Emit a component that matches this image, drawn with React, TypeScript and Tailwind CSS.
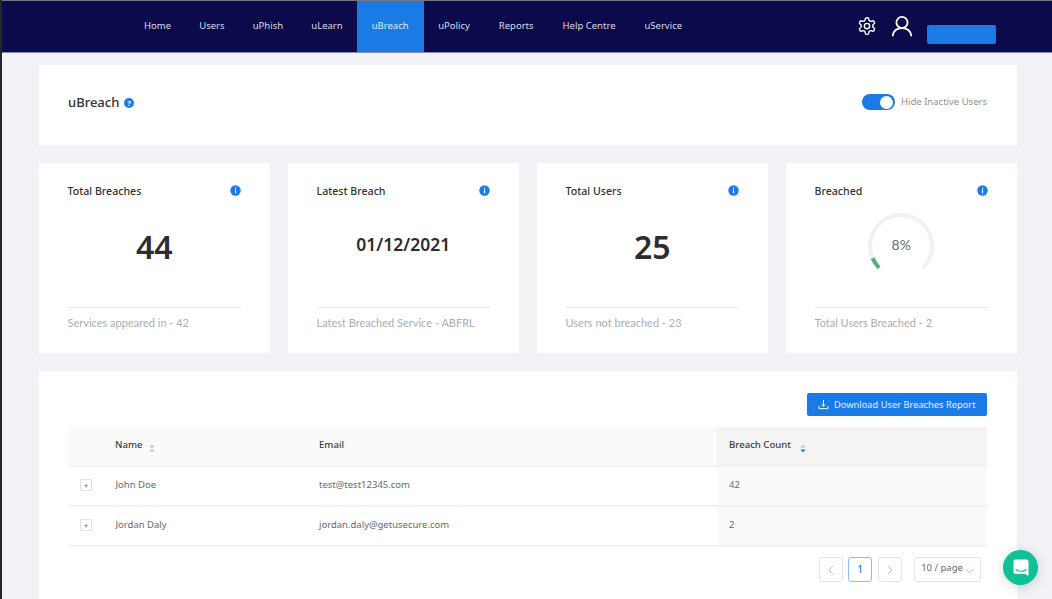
import React from "react";

const nav = ["Home", "Users", "uPhish", "uLearn", "uBreach", "uPolicy", "Reports", "Help Centre", "uService"];

function Info() {
  return (
    <svg width="11" height="11" viewBox="0 0 11 11" className="shrink-0">
      <circle cx="5.5" cy="5.5" r="5.2" fill="#1a7be4" />
      <rect x="5" y="2.3" width="1.1" height="1.2" fill="#fff" />
      <rect x="5" y="4.4" width="1.1" height="4" fill="#fff" />
    </svg>
  );
}

function Card({ title, footer, children }: { title: string; footer: string; children: React.ReactNode }) {
  return (
    <div className="flex flex-col bg-white pl-[28.5px] pr-[29px] h-[190px] pt-[20px] pb-[23px]">
      <div className="flex items-center justify-between h-[14px]">
        <span className="text-[10.6px] font-medium text-[#303236] mt-[4px]">{title}</span>
        <Info />
      </div>
      <div className="flex-1 flex items-center justify-center text-[#2b2d30]">{children}</div>
      <div className="border-t border-[#e8e8e8] pt-[8px] text-[11px] leading-[14px] text-[#abadb0]" style={{ fontFamily: "Lato, sans-serif" }}>{footer}</div>
    </div>
  );
}

function Sort({ active }: { active?: boolean }) {
  return (
    <svg width="6" height="9" viewBox="0 0 6 9" className={`mt-[6px] ${active ? "ml-[9px]" : "ml-[6px]"}`}>
      <path d="M3 0.5 L5.7 3.6 H0.3 Z" fill="#c4c6c8" />
      <path d="M3 8.5 L5.7 5.4 H0.3 Z" fill={active ? "#1a7be4" : "#c4c6c8"} />
    </svg>
  );
}

function Row({ name, email, count }: { name: string; email: string; count: string }) {
  return (
    <div className="grid grid-cols-[47px_204px_398px_1fr] h-[40px] border-b-2 border-[#f1f1f1] items-stretch text-[9.5px] text-[#66686b]">
      <div className="flex items-center pl-[12px] pb-[2px]">
        <span className="flex items-center justify-center w-[12px] h-[12px] border border-[#e2e2e2] rounded-[1px] text-[9px] leading-none text-[#777]">+</span>
      </div>
      <div className="flex items-center pb-[2px] pl-[0.5px]">{name}</div>
      <div className="flex items-center pb-[2px]">{email}</div>
      <div className="flex items-center pb-[2px] bg-[#fafafa] px-[12px]">{count}</div>
    </div>
  );
}

function PageBox({ children, className }: { children: React.ReactNode; className?: string }) {
  return (
    <div className={`flex items-center justify-center h-[25px] rounded-[3px] border ${className ?? ""}`}>{children}</div>
  );
}

function navClass(n: string) {
  if (n === "uBreach") return "bg-[#1a7be4] text-[#dfeaff] px-[15px]";
  if (n === "Home" || n === "Users" || n === "uPhish" || n === "uLearn") return "text-[#d9dbe8] px-[14.1px]";
  return "text-[#d9dbe8] px-[14.5px]";
}

export default function App() {
  return (
    <div className="relative h-[599px] w-[1052px] overflow-hidden bg-[#f0f2f5]" style={{ fontFamily: "'Noto Sans', 'Open Sans', sans-serif" }}>
      <div className="border-l-2 border-[#26262a] h-full">
        <header className="flex items-stretch h-[53px] bg-[#0b0b4b] border-t border-t-[#77778a] border-b border-b-[#8a8ab0] pl-[127.9px] pr-[56px]">
          <nav className="flex items-stretch">
            {nav.map((n) => (
              <div key={n} className={`flex items-center text-[9.5px] ${navClass(n)}`}>{n}</div>
            ))}
          </nav>
          <div className="ml-auto flex items-center">
            <svg width="20" height="20" viewBox="0 0 24 24" fill="none" stroke="#fff" strokeWidth="1.7" strokeLinecap="round" strokeLinejoin="round" className="mb-[1px]">
              <path d="M12.22 2h-.44a2 2 0 0 0-2 2v.18a2 2 0 0 1-1 1.73l-.43.25a2 2 0 0 1-2 0l-.15-.08a2 2 0 0 0-2.73.73l-.22.38a2 2 0 0 0 .73 2.73l.15.1a2 2 0 0 1 1 1.72v.51a2 2 0 0 1-1 1.74l-.15.09a2 2 0 0 0-.73 2.73l.22.38a2 2 0 0 0 2.73.73l.15-.08a2 2 0 0 1 2 0l.43.25a2 2 0 0 1 1 1.73V20a2 2 0 0 0 2 2h.44a2 2 0 0 0 2-2v-.18a2 2 0 0 1 1-1.73l.43-.25a2 2 0 0 1 2 0l.15.08a2 2 0 0 0 2.73-.73l.22-.39a2 2 0 0 0-.73-2.73l-.15-.08a2 2 0 0 1-1-1.74v-.5a2 2 0 0 1 1-1.74l.15-.09a2 2 0 0 0 .73-2.73l-.22-.38a2 2 0 0 0-2.73-.73l-.15.08a2 2 0 0 1-2 0l-.43-.25a2 2 0 0 1-1-1.73V4a2 2 0 0 0-2-2z" />
              <circle cx="12" cy="12" r="3.2" />
            </svg>
            <svg width="22" height="22" viewBox="0 0 22 22" fill="none" stroke="#fff" strokeWidth="1.8" strokeLinecap="round" className="ml-[14px] mb-[1px]">
              <circle cx="11" cy="7.5" r="5.6" />
              <path d="M1.8 20.5 C2.6 15.5 6 13.2 11 13.2 C16 13.2 19.4 15.5 20.2 20.5" />
            </svg>
            <div className="ml-[14px] mt-[15px] w-[69px] h-[19px] rounded-[2px] bg-[#1a7be4]" />
          </div>
        </header>

        <main className="pl-[37px] pr-[35px] pt-[12px] flex flex-col gap-[18px]">
          <section className="flex items-center justify-between bg-white h-[80px] pl-[29px] pr-[30px]">
            <div className="flex items-center gap-[5px] mb-[4px]">
              <span className="text-[13px] font-medium text-[#303236]">uBreach</span>
              <svg width="10" height="10" viewBox="0 0 10 10"><circle cx="5" cy="5" r="5" fill="#1a7be4" /><text x="5" y="7.6" textAnchor="middle" fontSize="7.5" fontWeight="700" fill="#fff">?</text></svg>
            </div>
            <div className="flex items-center gap-[6px] mb-[6px]">
              <div className="flex items-center justify-end w-[33px] h-[16px] rounded-full bg-[#1a7be4] pr-[1.5px]">
                <div className="w-[13px] h-[13px] rounded-full bg-white" />
              </div>
              <span className="text-[9.5px] text-[#8e9094]">Hide Inactive Users</span>
            </div>
          </section>

          <section className="grid grid-cols-4 gap-[18px]">
            <Card title="Total Breaches" footer="Services appeared in - 42"><span className="text-[32px] font-semibold leading-none mb-[11px]">44</span></Card>
            <Card title="Latest Breach" footer="Latest Breached Service - ABFRL"><span className="text-[17.5px] font-semibold leading-none mb-[15px]">01/12/2021</span></Card>
            <Card title="Total Users" footer="Users not breached - 23"><span className="text-[32px] font-semibold leading-none mb-[11px]">25</span></Card>
            <Card title="Breached" footer="Total Users Breached - 2">
              <div className="relative w-[66px] h-[66px] mt-[-12px]">
                <svg width="66" height="66" viewBox="0 0 66 66" fill="none" strokeWidth="4">
                  <path d="M11.1 54.9 A31 31 0 1 1 54.9 54.9" stroke="#f1f1f1" />
                  <path d="M11.1 54.9 A31 31 0 0 1 4.6 45.3" stroke="#52ad78" />
                </svg>
                <span className="absolute inset-0 flex items-center justify-center pb-[4px] text-[14px] text-[#66686b]" style={{ fontFamily: "Lato, sans-serif" }}>8%</span>
              </div>
            </Card>
          </section>

          <section className="bg-white h-[228px] pl-[29px] pr-[30px] pt-[22px]">
            <div className="flex justify-end">
              <div className="flex items-center h-[23px] px-[11.5px] rounded-[2px] bg-[#1a7be4] text-[9.3px] text-[#e6f0ff]">
                <svg width="11" height="11" viewBox="0 0 11 11" fill="none" stroke="#fff" strokeWidth="1" className="mr-[5px]">
                  <path d="M5.5 1 V7.2 M3.4 5.2 L5.5 7.4 L7.6 5.2 M1 7 V9.7 H10 V7" />
                </svg>
                Download User Breaches Report
              </div>
            </div>
            <div className="mt-[11px]">
              <div className="grid grid-cols-[47px_204px_398px_1fr] h-[40px] bg-[#fafafa] border-b border-[#f0f0f0] text-[9.6px] font-medium text-[#3a3c40]">
                <div />
                <div className="flex items-start pt-[11px]">Name<Sort /></div>
                <div className="flex items-start pt-[11px]">Email</div>
                <div className="flex items-start pt-[11px] bg-[#f4f4f4] px-[12px]">Breach Count<Sort active /></div>
              </div>
              <Row name="John Doe" email="test@test12345.com" count="42" />
              <Row name="Jordan Daly" email="jordan.daly@getusecure.com" count="2" />
            </div>
            <div className="flex justify-end items-center gap-[5px] mt-[10px] pr-[6px]">
              <PageBox className="w-[24px] border-[#e4e4e4]">
                <svg width="8" height="10" viewBox="0 0 8 10" fill="none" stroke="#c4c4c4"><path d="M6 1 L2 5 L6 9" /></svg>
              </PageBox>
              <PageBox className="w-[24px] border-[#8fbcf0] text-[#1a7be4] text-[10px] font-medium">1</PageBox>
              <PageBox className="w-[24px] ml-[1px] border-[#e4e4e4]">
                <svg width="8" height="10" viewBox="0 0 8 10" fill="none" stroke="#c4c4c4"><path d="M2 1 L6 5 L2 9" /></svg>
              </PageBox>
              <PageBox className="w-[67px] ml-[7px] border-[#e4e4e4] text-[#66686b] text-[9.5px] gap-[2px] pb-[3px]">
                10 / page
                <svg width="9" height="6" viewBox="0 0 9 6" fill="none" stroke="#bdbdbd" className="mt-[5px]"><path d="M1 1 L4.5 5 L8 1" /></svg>
              </PageBox>
            </div>
          </section>
        </main>
      </div>

      <div className="absolute left-[1003px] top-[550px] flex items-center justify-center w-[35px] h-[35px] rounded-full bg-[#10c198] shadow-[0_2px_12px_rgba(0,0,0,0.16)]">
        <svg width="16" height="18" viewBox="0 0 16 18">
          <path d="M2.5 0.5 H13.5 A2 2 0 0 1 15.5 2.5 V17 L12 15 H2.5 A2 2 0 0 1 0.5 13 V2.5 A2 2 0 0 1 2.5 0.5 Z" fill="#fff" />
          <path d="M3 10.5 C6 12.6 10 12.6 13 10.5" fill="none" stroke="#10c198" strokeWidth="1.2" strokeLinecap="round" />
        </svg>
      </div>
    </div>
  );
}
